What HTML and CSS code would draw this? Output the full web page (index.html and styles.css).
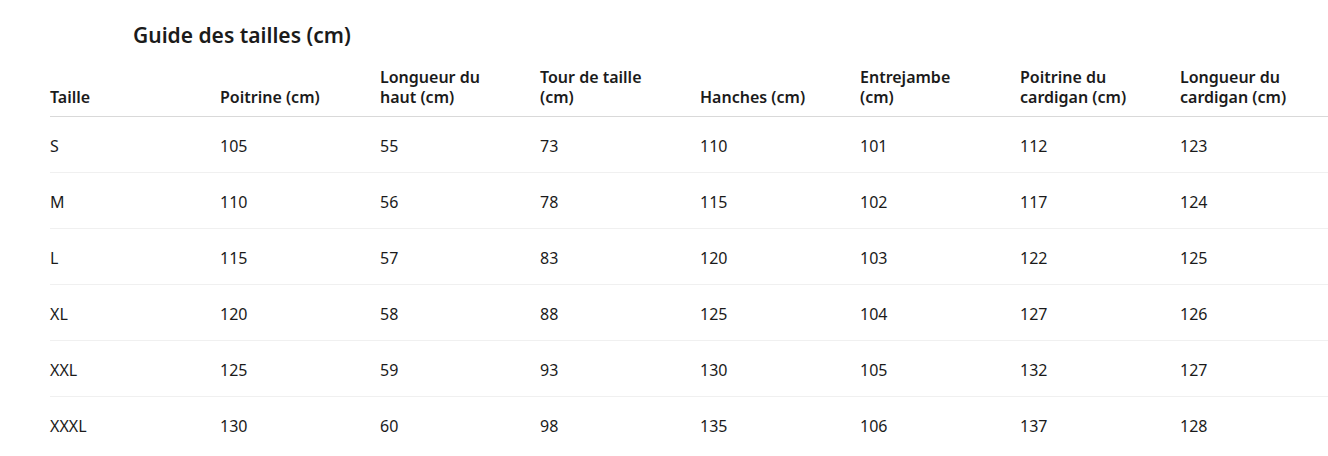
FILE: index.html
```html
<!DOCTYPE html>
<html lang="fr">
<head>
<meta charset="utf-8">
<title>Guide des tailles</title>
<link rel="stylesheet" href="styles.css">
</head>
<body>
<div class="page">
  <h2 class="title">Guide des tailles (cm)</h2>
  <table class="sizes">
    <colgroup>
      <col class="c-first"><col class="c"><col class="c"><col class="c"><col class="c"><col class="c"><col class="c"><col class="c">
    </colgroup>
    <thead>
      <tr>
        <th>Taille</th>
        <th>Poitrine (cm)</th>
        <th>Longueur du<br>haut (cm)</th>
        <th>Tour de taille<br>(cm)</th>
        <th>Hanches (cm)</th>
        <th>Entrejambe<br>(cm)</th>
        <th>Poitrine du<br>cardigan (cm)</th>
        <th>Longueur du<br>cardigan (cm)</th>
      </tr>
    </thead>
    <tbody>
      <tr><td>S</td><td>105</td><td>55</td><td>73</td><td>110</td><td>101</td><td>112</td><td>123</td></tr>
      <tr><td>M</td><td>110</td><td>56</td><td>78</td><td>115</td><td>102</td><td>117</td><td>124</td></tr>
      <tr><td>L</td><td>115</td><td>57</td><td>83</td><td>120</td><td>103</td><td>122</td><td>125</td></tr>
      <tr><td>XL</td><td>120</td><td>58</td><td>88</td><td>125</td><td>104</td><td>127</td><td>126</td></tr>
      <tr><td>XXL</td><td>125</td><td>59</td><td>93</td><td>130</td><td>105</td><td>132</td><td>127</td></tr>
      <tr><td>XXXL</td><td>130</td><td>60</td><td>98</td><td>135</td><td>106</td><td>137</td><td>128</td></tr>
    </tbody>
  </table>
</div>
</body>
</html>
```
FILE: styles.css
```css
html, body {
  margin: 0;
  padding: 0;
  background: #fff;
  overflow: hidden;
}
body {
  font-family: "Segoe UI", "Noto Sans", "Open Sans", sans-serif;
  color: #1b1b1b;
}
.page {
  padding: 0 0 0 50px;
  width: 1340px;
}
.title {
  margin: 0;
  padding: 22px 0 0 83px;
  font-size: 21px;
  line-height: 26px;
  font-weight: 600;
}
.sizes {
  margin-top: 19px;
  border-collapse: collapse;
  table-layout: fixed;
  width: 1290px;
}
.c-first { width: 170px; }
.c { width: 160px; }
.sizes th {
  text-align: left;
  vertical-align: bottom;
  font-size: 16px;
  font-weight: 600;
  line-height: 20px;
  padding: 0 8px 9px 0;
  border-bottom: 1px solid #d9d9d9;
}
.sizes td {
  font-size: 16px;
  line-height: 20px;
  height: 53px;
  padding: 2px 8px 0 0;
  vertical-align: middle;
  border-bottom: 1px solid #f0f0f0;
}
.sizes tbody tr:last-child td {
  border-bottom: none;
}
```
